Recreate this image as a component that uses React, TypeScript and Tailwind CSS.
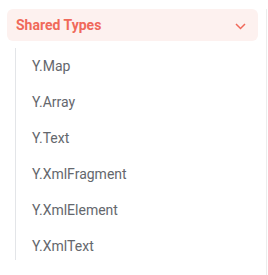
import React, { useState } from 'react';

const items = ['Y.Map', 'Y.Array', 'Y.Text', 'Y.XmlFragment', 'Y.XmlElement', 'Y.XmlText'];

const App: React.FC = () => {
  const [open, setOpen] = useState(true);

  return (
    <div className="w-[267px] h-[275px] bg-white border-r border-[#ececec] font-['Roboto',sans-serif]">
      <button
        onClick={() => setOpen(o => !o)}
        className="mt-[9px] ml-[7px] w-[251px] h-[32px] rounded-md bg-[#fdf1ef] pl-[9px] pr-[12px] flex items-center justify-between"
      >
        <span className="text-[14px] font-bold text-[#f0695a]">Shared Types</span>
        <svg width="11" height="7" viewBox="0 0 11 7" fill="none" className={open ? 'mt-[2px]' : 'mt-[2px] -rotate-90'}>
          <path d="M1 1l4.5 4.5L10 1" stroke="#f0695a" strokeWidth="1.5" />
        </svg>
      </button>

      {open && (
        <div className="mt-[7px] ml-[15px] border-l border-[#e3e5e8] flex flex-col">
          {items.map((item, idx) => (
            <div
              key={item}
              className={`h-9 flex items-center pl-[16px] text-[14px] text-[#64676d] ${idx === items.length - 1 ? '-mb-1' : ''}`}
            >
              {item}
            </div>
          ))}
        </div>
      )}
    </div>
  );
};

export default App;
